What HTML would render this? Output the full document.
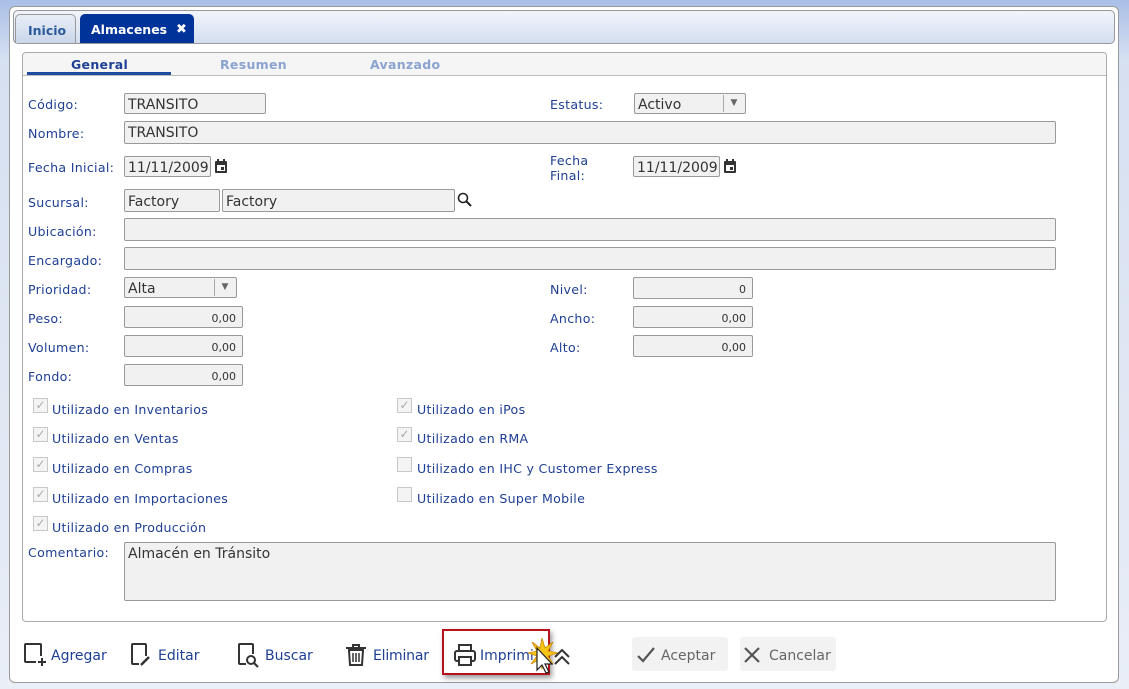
<!DOCTYPE html>
<html><head><meta charset="utf-8"><style>
*{box-sizing:border-box;margin:0;padding:0}
body{width:1129px;height:689px;overflow:hidden;background:linear-gradient(#a9bfe6,#d6e0f1 60px,#e9eef7);font-family:"DejaVu Sans","Liberation Sans",sans-serif;position:relative}
.a{position:absolute}
#outer{left:9px;top:6px;width:1110px;height:677px;background:#fff;border:1px solid #9a9a9a;border-radius:6px}
#strip{left:13px;top:10px;width:1102px;height:34px;background:linear-gradient(#f2f5fb,#d3def0);border:1px solid #999;border-radius:5px}
.tab{top:14px;height:29px;border-radius:5px 5px 0 0;font-weight:bold;font-size:12.5px;line-height:31px;padding-left:14px}
#inner{left:22px;top:52px;width:1085px;height:570px;border:1px solid #aaa;border-radius:4px;background:#fff}
#sub{left:23px;top:53px;width:1083px;height:23px;background:#f5f5f5;border-bottom:1px solid #bbb;border-radius:4px 4px 0 0}
.st{top:57px;font-size:12.5px;font-weight:bold;letter-spacing:.3px}
.l{font-size:12.6px;color:#1e3f94;letter-spacing:.3px;margin-top:2px}
.i{background:#f1f1f1;border:1px solid #999;border-radius:2px;font-size:14px;color:#333;padding-left:3px;padding-top:2px;line-height:19px;letter-spacing:0;overflow:hidden;white-space:nowrap}
.n{text-align:right;padding-right:6px;font-size:11px}
.cb{width:15px;height:15px;border:1px solid #c8c8c8;background:#f4f4f4;font-size:12px;color:#aaa;line-height:13px;text-align:center}
.bt{top:648px;font-size:14px;color:#1e3f94}
</style></head><body>
<div class="a" id="outer"></div>
<div class="a" id="strip"></div>
<div class="a tab" style="left:15px;width:61px;background:linear-gradient(#e9eef6,#c9d6ea);border:1px solid #999;border-bottom:none;color:#2a5a9a;padding-left:12px">Inicio</div>
<div class="a tab" style="left:80px;width:114px;background:#003399;color:#fff;padding-left:11px">Almacenes<span style="position:absolute;left:96px;font-size:13px">✖</span></div>
<div class="a" id="inner"></div>
<div class="a" id="sub"></div>
<div class="a st" style="left:71px;color:#1e3f94">General</div>
<div class="a" style="left:27px;top:72px;width:144px;height:3px;background:#1e4aa0"></div>
<div class="a st" style="left:220px;color:#8aa3cf">Resumen</div>
<div class="a st" style="left:370px;color:#8aa3cf">Avanzado</div>

<div class="a l" style="left:28px;top:95px">Código:</div>
<div class="a i" style="left:124px;top:93px;width:142px;height:21px">TRANSITO</div>
<div class="a l" style="left:550px;top:95px">Estatus:</div>
<div class="a i" style="left:634px;top:93px;width:112px;height:21px">Activo<span style="position:absolute;left:88px;top:1px;width:21px;height:17px;border-left:1px solid #aaa;font-size:9px;color:#666;text-align:center;line-height:17px">▼</span></div>
<div class="a l" style="left:28px;top:124px">Nombre:</div>
<div class="a i" style="left:124px;top:121px;width:932px;height:23px">TRANSITO</div>
<div class="a l" style="left:28px;top:158px">Fecha Inicial:</div>
<div class="a i" style="left:124px;top:156px;width:87px;height:21px">11/11/2009</div>
<svg class="a" style="left:214px;top:159px" width="14" height="15" viewBox="0 0 14 15"><rect x="1" y="2" width="12" height="12" rx="1" fill="#333"/><rect x="3" y="6" width="8" height="6" fill="#fff"/><rect x="7" y="8" width="3" height="3" fill="#333"/><rect x="3" y="0" width="2" height="3" fill="#333"/><rect x="9" y="0" width="2" height="3" fill="#333"/></svg>
<div class="a l" style="left:550px;top:151px;line-height:15px">Fecha<br>Final:</div>
<div class="a i" style="left:633px;top:156px;width:87px;height:21px">11/11/2009</div>
<svg class="a" style="left:723px;top:159px" width="14" height="15" viewBox="0 0 14 15"><rect x="1" y="2" width="12" height="12" rx="1" fill="#333"/><rect x="3" y="6" width="8" height="6" fill="#fff"/><rect x="7" y="8" width="3" height="3" fill="#333"/><rect x="3" y="0" width="2" height="3" fill="#333"/><rect x="9" y="0" width="2" height="3" fill="#333"/></svg>
<div class="a l" style="left:28px;top:193px">Sucursal:</div>
<div class="a i" style="left:124px;top:189px;width:96px;height:23px;line-height:21px">Factory</div>
<div class="a i" style="left:222px;top:189px;width:233px;height:23px;line-height:21px">Factory</div>
<svg class="a" style="left:457px;top:192px" width="16" height="16" viewBox="0 0 16 16"><circle cx="6" cy="6" r="4.5" fill="none" stroke="#222" stroke-width="1.6"/><path d="M9.5 9.5L14 14" stroke="#222" stroke-width="2"/></svg>
<div class="a l" style="left:28px;top:222px">Ubicación:</div>
<div class="a i" style="left:124px;top:218px;width:932px;height:23px"></div>
<div class="a l" style="left:28px;top:251px">Encargado:</div>
<div class="a i" style="left:124px;top:247px;width:932px;height:23px"></div>
<div class="a l" style="left:28px;top:280px">Prioridad:</div>
<div class="a i" style="left:124px;top:277px;width:113px;height:21px">Alta<span style="position:absolute;left:89px;top:1px;width:21px;height:17px;border-left:1px solid #aaa;font-size:9px;color:#666;text-align:center;line-height:17px">▼</span></div>
<div class="a l" style="left:550px;top:280px">Nivel:</div>
<div class="a i n" style="left:633px;top:277px;width:120px;height:22px">0</div>
<div class="a l" style="left:28px;top:309px">Peso:</div>
<div class="a i n" style="left:124px;top:306px;width:119px;height:22px">0,00</div>
<div class="a l" style="left:550px;top:309px">Ancho:</div>
<div class="a i n" style="left:633px;top:306px;width:120px;height:22px">0,00</div>
<div class="a l" style="left:28px;top:338px">Volumen:</div>
<div class="a i n" style="left:124px;top:335px;width:119px;height:22px">0,00</div>
<div class="a l" style="left:550px;top:338px">Alto:</div>
<div class="a i n" style="left:633px;top:335px;width:120px;height:22px">0,00</div>
<div class="a l" style="left:28px;top:367px">Fondo:</div>
<div class="a i n" style="left:124px;top:364px;width:119px;height:22px">0,00</div>

<div class="a cb" style="left:33px;top:398px">✓</div><div class="a l" style="left:52px;top:400px">Utilizado en Inventarios</div>
<div class="a cb" style="left:33px;top:427px">✓</div><div class="a l" style="left:52px;top:429px">Utilizado en Ventas</div>
<div class="a cb" style="left:33px;top:457px">✓</div><div class="a l" style="left:52px;top:459px">Utilizado en Compras</div>
<div class="a cb" style="left:33px;top:487px">✓</div><div class="a l" style="left:52px;top:489px">Utilizado en Importaciones</div>
<div class="a cb" style="left:33px;top:516px">✓</div><div class="a l" style="left:52px;top:518px">Utilizado en Producción</div>
<div class="a cb" style="left:397px;top:398px">✓</div><div class="a l" style="left:417px;top:400px">Utilizado en iPos</div>
<div class="a cb" style="left:397px;top:427px">✓</div><div class="a l" style="left:417px;top:429px">Utilizado en RMA</div>
<div class="a cb" style="left:397px;top:457px"></div><div class="a l" style="left:417px;top:459px">Utilizado en IHC y Customer Express</div>
<div class="a cb" style="left:397px;top:487px"></div><div class="a l" style="left:417px;top:489px">Utilizado en Super Mobile</div>

<div class="a l" style="left:28px;top:543px">Comentario:</div>
<div class="a i" style="left:124px;top:542px;width:932px;height:59px;line-height:19px;padding-left:3px">Almacén en Tránsito</div>

<svg class="a" style="left:23px;top:642px" width="24" height="26" viewBox="0 0 24 26"><path d="M13 20H3a1 1 0 0 1-1-1V3a1 1 0 0 1 1-1h14a1 1 0 0 1 1 1v11" fill="none" stroke="#333" stroke-width="2"/><path d="M19 16v8M15 20h8" stroke="#333" stroke-width="2"/></svg>
<div class="a bt" style="left:51px">Agregar</div>
<svg class="a" style="left:130px;top:642px" width="24" height="26" viewBox="0 0 24 26"><path d="M9 22H3a1 1 0 0 1-1-1V3a1 1 0 0 1 1-1h12a1 1 0 0 1 1 1v11" fill="none" stroke="#333" stroke-width="2"/><path d="M11 23l8-8" stroke="#333" stroke-width="2.5"/></svg>
<div class="a bt" style="left:158px">Editar</div>
<svg class="a" style="left:237px;top:642px" width="26" height="26" viewBox="0 0 26 26"><path d="M9 22H3a1 1 0 0 1-1-1V3a1 1 0 0 1 1-1h12a1 1 0 0 1 1 1v9" fill="none" stroke="#333" stroke-width="2"/><circle cx="14" cy="18" r="4" fill="none" stroke="#333" stroke-width="2"/><path d="M17 21l4 4" stroke="#333" stroke-width="2.2"/></svg>
<div class="a bt" style="left:265px">Buscar</div>
<svg class="a" style="left:345px;top:643px" width="22" height="24" viewBox="0 0 22 24"><path d="M1 5h20M8 5V2h6v3" fill="none" stroke="#333" stroke-width="2"/><path d="M4 7h14l-1 15H5z" fill="none" stroke="#333" stroke-width="2"/><path d="M8 10v9M11 10v9M14 10v9" stroke="#333" stroke-width="1.5"/></svg>
<div class="a bt" style="left:373px;letter-spacing:-.2px">Eliminar</div>
<div class="a" style="left:442px;top:629px;width:108px;height:46px;border:2px solid #b5121b;box-shadow:2px 3px 5px rgba(0,0,0,.4)"></div>
<svg class="a" style="left:453px;top:643px" width="24" height="24" viewBox="0 0 24 24"><path d="M6 8V2h12v6" fill="none" stroke="#333" stroke-width="2"/><rect x="2" y="8" width="20" height="10" rx="2" fill="none" stroke="#333" stroke-width="2"/><rect x="6" y="14" width="12" height="8" fill="#fff" stroke="#333" stroke-width="2"/></svg>
<div class="a bt" style="left:480px">Imprimi</div>
<svg class="a" style="left:528px;top:636px" width="48" height="40" viewBox="0 0 48 40"><path d="M14 2l3 10 8-6-5 9 10 2-10 3 5 8-8-5-3 10-2-10-9 5 6-8-9-3 9-2-5-9 8 6z" fill="#f5c518" stroke="#d08a00" stroke-width=".8"/><path d="M9 12v22l5-5 4 8 3-1-4-8h7z" fill="#fff" stroke="#222" stroke-width="1.2"/><path d="M27 21l7-7 7 7M27 28l7-7 7 7" fill="none" stroke="#333" stroke-width="2"/></svg>
<div class="a" style="left:632px;top:637px;width:96px;height:34px;background:#f2f2f2;border-radius:3px"></div>
<svg class="a" style="left:636px;top:645px" width="20" height="20" viewBox="0 0 20 20"><path d="M2 11l5 5L18 3" fill="none" stroke="#555" stroke-width="2.2"/></svg>
<div class="a" style="left:661px;top:648px;font-size:14px;color:#666">Aceptar</div>
<div class="a" style="left:740px;top:637px;width:96px;height:34px;background:#f2f2f2;border-radius:3px"></div>
<svg class="a" style="left:742px;top:645px" width="20" height="20" viewBox="0 0 20 20"><path d="M3 3l14 14M17 3L3 17" stroke="#555" stroke-width="2.2"/></svg>
<div class="a" style="left:769px;top:648px;font-size:14px;color:#666">Cancelar</div>
</body></html>
